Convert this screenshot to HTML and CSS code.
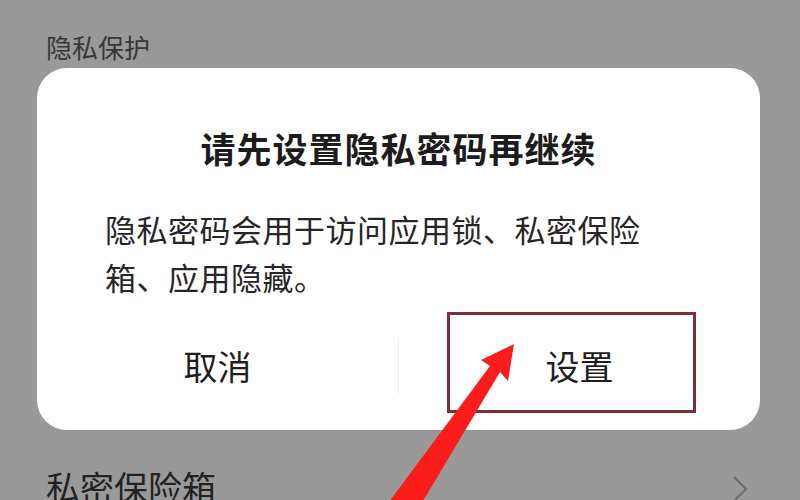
FILE: index.html
```html
<!DOCTYPE html>
<html lang="zh-CN">
<head>
<meta charset="utf-8">
<title>隐私保护</title>
<link rel="stylesheet" href="styles.css">
</head>
<body>
<div class="screen">
  <div class="section-label">隐私保护</div>
  <div class="dialog">
    <div class="dialog-title">请先设置隐私密码再继续</div>
    <div class="dialog-body">隐私密码会用于访问应用锁、私密保险<br>箱、应用隐藏。</div>
    <div class="dialog-actions">
      <div class="action">取消</div>
      <div class="action-divider"></div>
      <div class="action">设置</div>
    </div>
  </div>
  <div class="list-item">
    <span class="item-text">私密保险箱</span>
    <svg class="chevron" width="20" height="30" viewBox="0 0 20 30"><path d="M4 3 L16 15 L4 27" fill="none" stroke="#6e6e6e" stroke-width="2.2"/></svg>
  </div>
  <div class="highlight-box"></div>
  <svg class="arrow" width="800" height="500" viewBox="0 0 800 500">
    <polygon points="386,506 490,366 481,360 514,344 508,381 500,372 420,506" fill="#fb1c1c"/>
  </svg>
</div>
</body>
</html>
```
FILE: styles.css
```css
html, body {
  margin: 0;
  padding: 0;
}
body {
  background: #999999;
  font-family: "Noto Sans CJK SC", "Noto Sans", sans-serif;
  width: 800px;
  height: 500px;
  overflow: hidden;
}
.screen {
  position: relative;
  width: 800px;
  height: 500px;
  overflow: hidden;
  padding-top: 32px;
  box-sizing: border-box;
}
.section-label {
  margin-left: 46px;
  font-size: 26px;
  line-height: 30px;
  color: #383838;
}
.dialog {
  margin: 6px 0 0 37px;
  width: 723px;
  height: 362px;
  box-sizing: border-box;
  background: #ffffff;
  border-radius: 30px;
  padding-top: 60px;
  display: flex;
  flex-direction: column;
}
.dialog-title {
  text-align: center;
  font-size: 35px;
  line-height: 40px;
  font-weight: 700;
  color: #1c1c1c;
  letter-spacing: 1px;
}
.dialog-body {
  margin-top: 37px;
  padding-left: 68px;
  font-size: 31px;
  line-height: 48px;
  letter-spacing: 0.5px;
  color: #262626;
}
.dialog-actions {
  margin-top: 25px;
  height: 80px;
  display: flex;
  align-items: center;
}
.action {
  flex: 1;
  text-align: center;
  font-size: 34px;
  line-height: 40px;
  color: #1e1e1e;
}
.action-divider {
  width: 1px;
  height: 56px;
  background: #f0f0f0;
}
.list-item {
  margin: 40px 0 0 46px;
  width: 704px;
  display: flex;
  align-items: center;
  justify-content: space-between;
}
.item-text {
  font-size: 34px;
  line-height: 34px;
  color: #222222;
}
.chevron {
  margin-top: 4px;
}
.highlight-box {
  position: absolute;
  left: 447px;
  top: 312px;
  width: 249px;
  height: 101px;
  box-sizing: border-box;
  border: 3px solid #7c2e3a;
}
.arrow {
  position: absolute;
  left: 0;
  top: 0;
}
```
